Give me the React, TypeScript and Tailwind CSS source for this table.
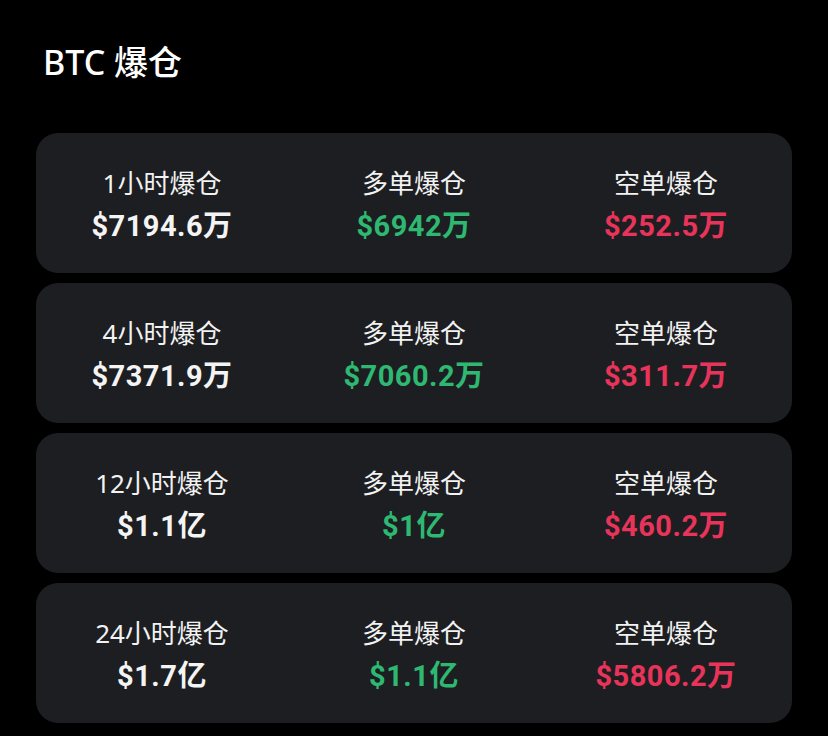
const rows = [
  { period: '1小时爆仓', total: '$7194.6万', long: '$6942万', short: '$252.5万' },
  { period: '4小时爆仓', total: '$7371.9万', long: '$7060.2万', short: '$311.7万' },
  { period: '12小时爆仓', total: '$1.1亿', long: '$1亿', short: '$460.2万' },
  { period: '24小时爆仓', total: '$1.7亿', long: '$1.1亿', short: '$5806.2万' },
];

const labelFont = "font-['Noto_Sans','Noto_Sans_CJK_SC',sans-serif]";
const valueFont = "font-['Roboto','Noto_Sans_CJK_SC',sans-serif]";

function Cell({ label, value, color }: { label: string; value: string; color: string }) {
  return (
    <div className="flex flex-col items-center pt-[34px]">
      <div className={`${labelFont} text-[26px] leading-[32px] text-[#f2f2f2]`}>{label}</div>
      <div className={`${valueFont} mt-[9px] text-[29px] font-bold leading-[36px] tracking-[0.5px] ${color}`}>
        {value}
      </div>
    </div>
  );
}

export default function App() {
  return (
    <div className="min-h-[736px] w-[828px] bg-black px-[36px] pt-[42px]">
      <h1 className={`${labelFont} pl-[7px] text-[34px] font-medium leading-[40px] text-white`}>BTC 爆仓</h1>

      <div className="mt-[51px] flex flex-col gap-[10px]">
        {rows.map((r) => (
          <div key={r.period} className="grid h-[140px] grid-cols-3 rounded-[22px] bg-[#1d1e21]">
            <Cell label={r.period} value={r.total} color="text-[#f4f4f4]" />
            <Cell label="多单爆仓" value={r.long} color="text-[#2eb872]" />
            <Cell label="空单爆仓" value={r.short} color="text-[#e8345a]" />
          </div>
        ))}
      </div>
    </div>
  );
}
